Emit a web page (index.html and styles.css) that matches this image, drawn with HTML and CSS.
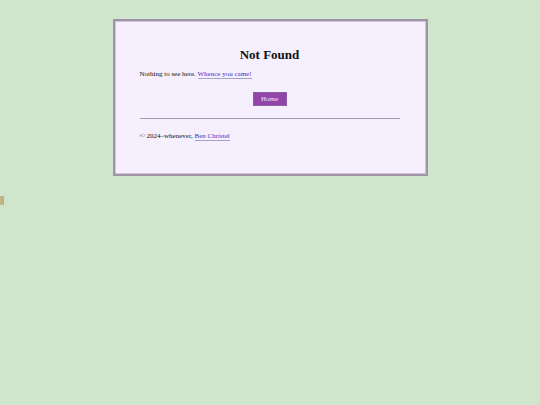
FILE: index.html
```html
<!DOCTYPE html>
<html>
<head>
<meta charset="utf-8">
<link rel="stylesheet" href="styles.css">
</head>
<body>
<main class="card">
  <h1 class="title">Not Found</h1>
  <p class="text">Nothing to see here. <a href="#" class="link">Whence you came!</a></p>
  <div class="actions"><a href="#" class="btn">Home</a></div>
  <hr class="rule">
  <footer class="foot">© 2024–whenever, <a href="#" class="link">Ben Christel</a></footer>
</main>
<div class="stray">||</div>
</body>
</html>
```
FILE: styles.css
```css
html, body {
  margin: 0;
  padding: 0;
  background: #cfe6cc;
  font-family: "Liberation Serif", serif;
  color: #111;
}
.card {
  box-sizing: border-box;
  width: 315px;
  height: 157px;
  margin: 19px auto 0;
  background: #f6effe;
  border: 2px solid #a193a8;
  box-shadow: inset 0 0 0 1px #cfc4d6;
  padding: 26px 26px 0 25px;
}
.title {
  margin: 0;
  text-align: center;
  font-size: 13px;
  line-height: 16px;
  font-weight: bold;
}
.text {
  margin: 7px 0 0;
  font-size: 7px;
  line-height: 9px;
}
.link {
  color: #3b30c8;
  text-decoration: none;
  border-bottom: 1px solid #a6a0cc;
}
.actions {
  display: flex;
  justify-content: center;
  margin-top: 13px;
}
.btn {
  display: block;
  width: 34px;
  height: 14px;
  box-sizing: border-box;
  background: #9244aa;
  border: 1px solid #8a60a0;
  color: #f3e8f7;
  font-size: 7px;
  line-height: 12px;
  text-align: center;
  text-decoration: none;
}
.rule {
  margin: 12px 0 0;
  border: 0;
  height: 1px;
  background: #a59cad;
}
.foot {
  margin-top: 13px;
  font-size: 7px;
  line-height: 9px;
}
.stray {
  margin-top: 18px;
  font-size: 10px;
  line-height: 11px;
  color: #333;
}
```
